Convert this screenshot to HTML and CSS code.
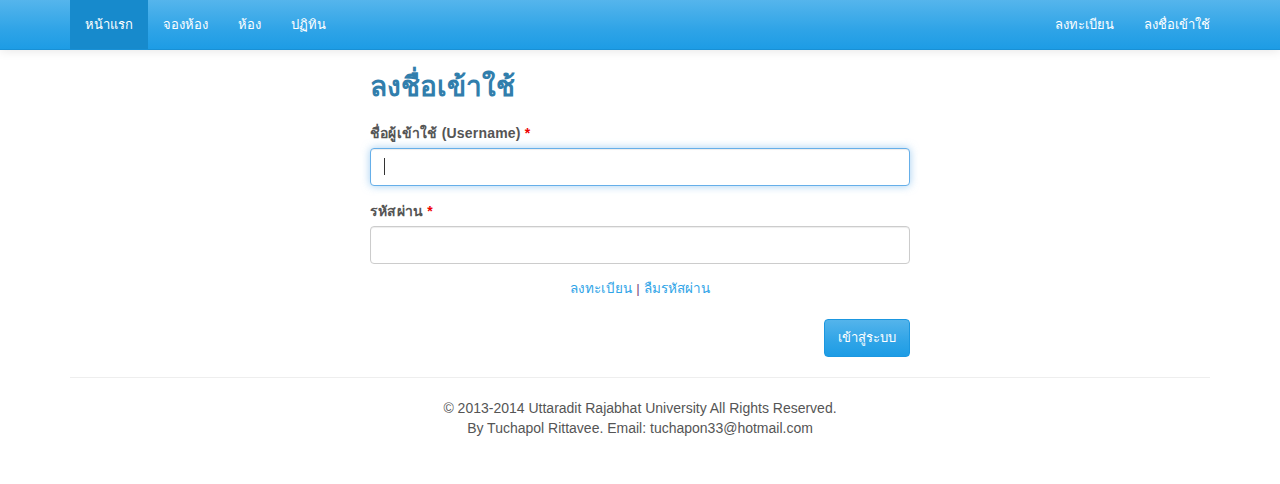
FILE: index.html
```html
<!DOCTYPE html>
<html lang="th">
<head>
<meta charset="utf-8">
<title>ลงชื่อเข้าใช้</title>
<link rel="stylesheet" href="styles.css">
</head>
<body>
<nav class="navbar">
  <div class="container nav-inner">
    <ul class="nav">
      <li><a class="active" href="#">หน้าแรก</a></li>
      <li><a href="#">จองห้อง</a></li>
      <li><a href="#">ห้อง</a></li>
      <li><a href="#">ปฏิทิน</a></li>
    </ul>
    <ul class="nav nav-right">
      <li><a href="#">ลงทะเบียน</a></li>
      <li><a href="#">ลงชื่อเข้าใช้</a></li>
    </ul>
  </div>
</nav>
<main class="container">
  <div class="login">
    <h1 class="title">ลงชื่อเข้าใช้</h1>
    <form class="form">
      <div class="form-group">
        <label class="label">ชื่อผู้เข้าใช้ (Username) <span class="req">*</span></label>
        <div class="field">
          <input class="input focus" type="text">
          <span class="caret"></span>
        </div>
      </div>
      <div class="form-group">
        <label class="label">รหัสผ่าน <span class="req">*</span></label>
        <div class="field">
          <input class="input" type="password">
        </div>
      </div>
      <p class="links"><a href="#">ลงทะเบียน</a> <span class="sep">|</span> <a href="#">ลืมรหัสผ่าน</a></p>
      <div class="actions">
        <button class="btn" type="button">เข้าสู่ระบบ</button>
      </div>
    </form>
  </div>
  <footer class="footer">
    <p>© 2013-2014 Uttaradit Rajabhat University All Rights Reserved.<br>By Tuchapol Rittavee. Email: tuchapon33@hotmail.com</p>
  </footer>
</main>
</body>
</html>
```
FILE: styles.css
```css
* { box-sizing: border-box; }
html, body { margin: 0; padding: 0; }
body {
  font-family: "Liberation Sans", Tahoma, sans-serif;
  font-size: 14px;
  line-height: 20px;
  color: #555;
  background: #fff;
}
.container {
  width: 1140px;
  margin: 0 auto;
}
.navbar {
  height: 50px;
  background: linear-gradient(to bottom, #55b5ec 0%, #2fa4e7 60%, #1d9ce5 100%);
  border-bottom: 1px solid #1990d5;
  box-shadow: 0 1px 10px rgba(0,0,0,0.1);
}
.nav-inner {
  display: flex;
  justify-content: space-between;
  height: 50px;
}
.nav {
  display: flex;
  list-style: none;
  margin: 0;
  padding: 0;
}
.nav-right { margin-right: -15px; }
.nav a {
  display: block;
  height: 49px;
  padding: 15px 15px;
  color: #fff;
  text-decoration: none;
  font-size: 13px;
  line-height: 20px;
}
.nav a.active { background: #178acc; }
.login {
  width: 540px;
  margin: 0 auto;
}
.title {
  margin: 20px 0 20px;
  font-size: 28px;
  line-height: 33px;
  font-weight: bold;
  color: #317eac;
}
.form-group { margin-bottom: 15px; }
.label {
  display: block;
  font-weight: bold;
  margin-bottom: 5px;
  color: #555;
  letter-spacing: 0.2px;
}
.req { color: #e00; }
.field { position: relative; }
.input {
  display: block;
  width: 100%;
  height: 38px;
  padding: 6px 12px;
  font-size: 14px;
  border: 1px solid #ccc;
  border-radius: 4px;
  background: #fff;
  box-shadow: inset 0 1px 1px rgba(0,0,0,0.075);
  font-family: inherit;
}
.input.focus {
  border-color: #66afe9;
  outline: 0;
  box-shadow: inset 0 1px 1px rgba(0,0,0,0.075), 0 0 8px rgba(102,175,233,0.6);
}
.caret {
  position: absolute;
  left: 14px;
  top: 10px;
  width: 1px;
  height: 17px;
  background: #333;
}
.links {
  margin: 0 0 20px;
  height: 20px;
  text-align: center;
  font-size: 13.5px;
  line-height: 20px;
}
.links a { color: #2fa4e7; text-decoration: none; }
.sep { color: #7d4a7d; }
.actions {
  display: flex;
  justify-content: flex-end;
}
.btn {
  height: 38px;
  padding: 8px 13px;
  font-family: inherit;
  font-size: 13px;
  line-height: 20px;
  color: #fff;
  background: linear-gradient(to bottom, #54b4eb 0%, #2fa4e7 60%, #1d9ce5 100%);
  border: 1px solid #1b97e0;
  border-radius: 4px;
}
.footer {
  margin-top: 20px;
  border-top: 1px solid #eee;
  padding-top: 20px;
  text-align: center;
}
.footer p { margin: 0; }
```
